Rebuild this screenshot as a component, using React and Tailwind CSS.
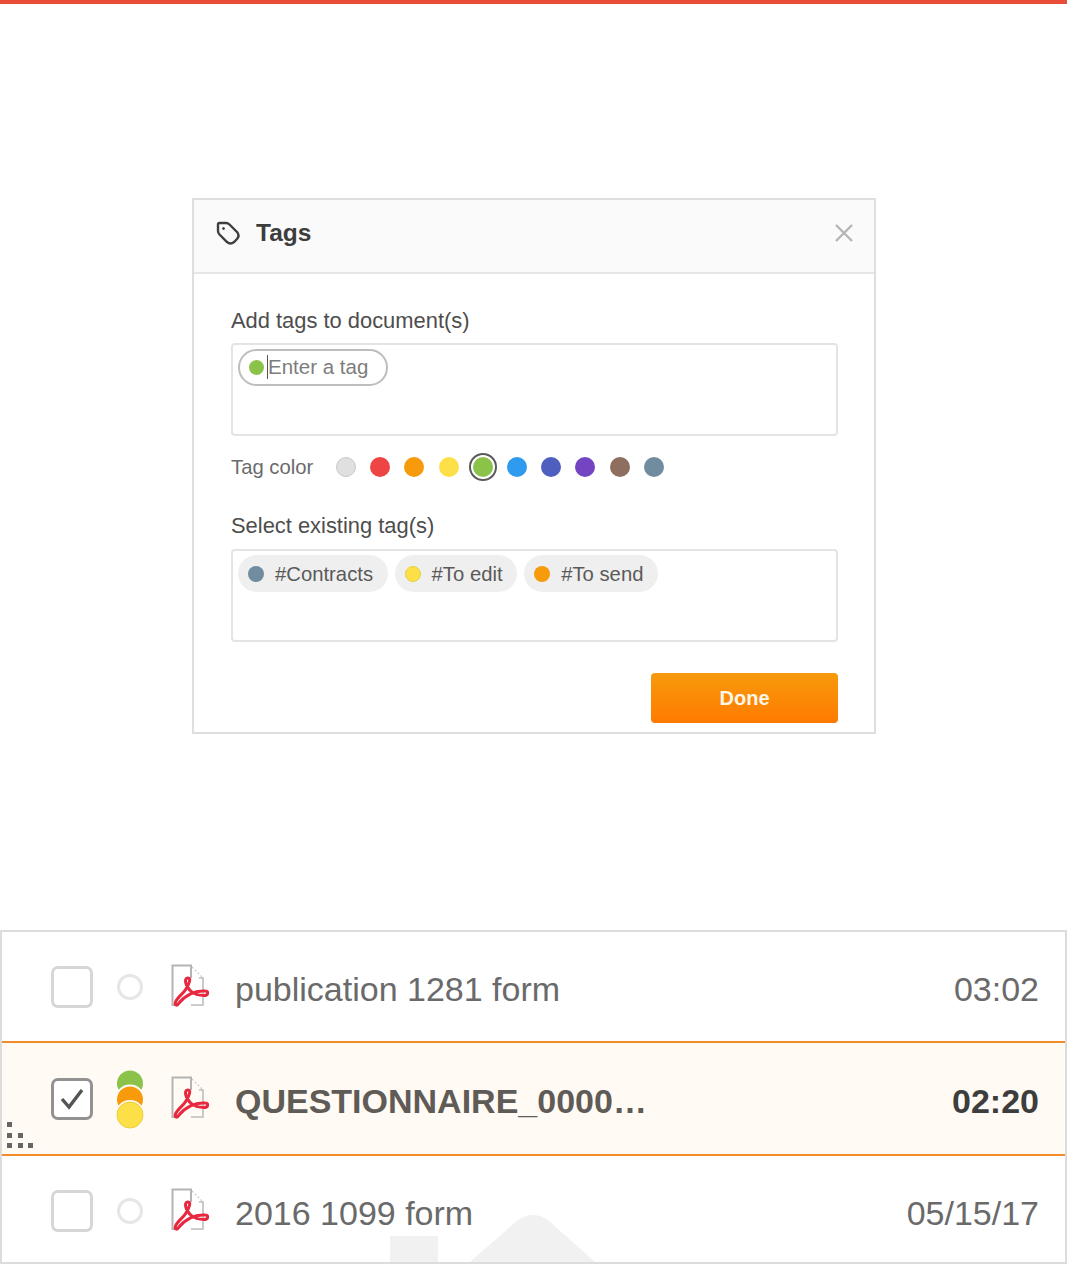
const tagColors = [
  "#e0e0e0",
  "#ef4444",
  "#f79a0c",
  "#fde047",
  "#8bc34a",
  "#2f9bef",
  "#4f5fc0",
  "#7445c2",
  "#8d6e5f",
  "#708c9e",
];

const existingTags = [
  { label: "#Contracts", color: "#708c9e" },
  { label: "#To edit", color: "#fde047", ring: true },
  { label: "#To send", color: "#f79a0c" },
];

const rows = [
  { name: "publication 1281 form", time: "03:02", h: "h-[109px]" },
  { name: "QUESTIONNAIRE_0000…", time: "02:20", h: "h-[115px]", selected: true },
  { name: "2016 1099 form", time: "05/15/17", h: "h-[106px] pt-[4px]", last: true },
];

const TagIcon = () => (
  <svg width="28" height="28" viewBox="0 0 28 28" fill="none" stroke="#3f3f3f" strokeWidth="2.4">
    <path d="M4 5.5 Q4 4 5.5 4 L12 4 Q14 4 15.5 5.5 L23 13 Q26 16.5 23 20 L20 23 Q16.5 26 13 23 L5.5 15.5 Q4 14 4 12 Z" />
    <circle cx="9.5" cy="9.5" r="1" fill="#3f3f3f" strokeWidth="1" />
  </svg>
);

const CloseIcon = () => (
  <svg width="20" height="20" viewBox="0 0 20 20" stroke="#b5b5b5" strokeWidth="2.4">
    <path d="M2 2 L18 18 M18 2 L2 18" />
  </svg>
);

const PdfIcon = () => (
  <svg width="38" height="46" viewBox="0 0 38 46" fill="none">
    <path d="M8 41 H1.5 V1.5 H20 V14" stroke="#b4b4b4" strokeWidth="2" />
    <path d="M20 41 H32 V14 H28" stroke="#bdbdbd" strokeWidth="1.6" />
    <path d="M21 3 L31 13" stroke="#c8c8c8" strokeWidth="1.2" strokeDasharray="2 2" />
    <path
      d="M17 14 C14 14 14 18 15.5 21 C19 28.5 24 31.5 33 31.5 C37.5 31.5 38 27 34 27 C24 26 14 31.5 8 39 C6 42.5 3.5 41.5 4.5 38 C6.5 33 12 30 15 25 C18 20 20.5 14 17 14 Z"
      stroke="#e8283f"
      strokeWidth="3"
    />
  </svg>
);

const CheckBox = ({ checked }) => (
  <div
    className={`flex h-[42px] w-[42px] items-center justify-center rounded-[7px] border-[3px] bg-white ${
      checked ? "border-[#929292]" : "border-[#d6d6d6]"
    }`}
  >
    {checked && (
      <svg width="28" height="24" viewBox="0 0 28 24" fill="none" stroke="#555" strokeWidth="3.4">
        <path d="M4 12 L11 20 L24 3" />
      </svg>
    )}
  </div>
);

const TagStack = () => (
  <svg width="30" height="60" viewBox="0 0 30 60">
    <circle cx="15" cy="14.5" r="13" fill="#8bc34a" />
    <circle cx="15" cy="30.5" r="15" fill="#fffaf3" />
    <circle cx="15" cy="30.5" r="13" fill="#f79a0c" />
    <circle cx="15" cy="46" r="15" fill="#fffaf3" />
    <circle cx="15" cy="46" r="13" fill="#fde047" stroke="#e8cf3a" strokeWidth="1" />
  </svg>
);

const DragDots = () => (
  <div className="absolute bottom-[6px] left-[5px] flex flex-col gap-[5.5px]">
    {[1, 2, 3].map((n) => (
      <div key={n} className="flex gap-[5.5px]">
        {Array.from({ length: n }).map((_, i) => (
          <span key={i} className="h-[5px] w-[5px] bg-[#666]" />
        ))}
      </div>
    ))}
  </div>
);

const TagsDialog = () => (
  <div className="ml-[192px] mt-[194px] w-[684px] border-2 border-[#dedede] bg-white">
    <div className="flex h-[74px] items-center justify-between border-b-2 border-[#e6e6e6] bg-[#fafafa] pb-[6px] pl-[20px] pr-[20px]">
      <div className="flex items-center gap-[14px]">
        <TagIcon />
        <span className="text-[24.5px] font-bold text-[#3d3d3d]">Tags</span>
      </div>
      <CloseIcon />
    </div>

    <div className="pl-[37px] pr-[36px] pt-[33px] pb-[9px]">
      <p className="text-[21.9px] leading-[28px] text-[#4d4d4d]">Add tags to document(s)</p>
      <div className="mt-[8px] h-[93px] rounded border-2 border-[#e4e4e4] pl-[5px] pt-[4px]">
        <div className="flex h-[37px] w-[150px] items-center rounded-full border-2 border-[#bdbdbd] pl-[9px]">
          <span className="h-[15px] w-[15px] rounded-full bg-[#8bc34a]" />
          <span className="ml-[3px] mb-[2px] border-l border-[#555] text-[20.5px] leading-[24px] text-[#7d7d7d]">
            Enter a tag
          </span>
        </div>
      </div>

      <div className="mt-[14px] flex h-[34px] items-center">
        <span className="w-[105px] text-[20.3px] text-[#6b6b6b]">Tag color</span>
        <div className="flex items-center gap-[14.2px]">
          {tagColors.map((color, i) =>
            i === 4 ? (
              <span
                key={color}
                className="-mx-[4px] flex h-[28px] w-[28px] items-center justify-center rounded-full border-2 border-[#5a5a5a] bg-white"
              >
                <span className="h-[20px] w-[20px] rounded-full" style={{ background: color }} />
              </span>
            ) : (
              <span
                key={color}
                className={`h-[20px] w-[20px] rounded-full ${i === 0 ? "border border-[#c9c9c9]" : ""}`}
                style={{ background: color }}
              />
            )
          )}
        </div>
      </div>

      <p className="mt-[28px] text-[21.9px] leading-[28px] text-[#4d4d4d]">Select existing tag(s)</p>
      <div className="mt-[9px] flex h-[93px] items-start gap-[7px] rounded border-2 border-[#e4e4e4] pl-[5px] pt-[4px]">
        {existingTags.map((tag) => (
          <div key={tag.label} className="flex h-[37px] items-center rounded-full bg-[#efefef] pl-[10px] pr-[14.5px]">
            <span
              className={`h-[16px] w-[16px] rounded-full ${tag.ring ? "border border-[#e8cf3a]" : ""}`}
              style={{ background: tag.color }}
            />
            <span className="ml-[11px] pt-[1px] text-[20.3px] text-[#5a5a5a]">{tag.label}</span>
          </div>
        ))}
      </div>

      <div className="mt-[31px] flex justify-end">
        <button className="h-[50px] w-[187px] rounded-[4px] bg-gradient-to-b from-[#f79a0c] to-[#ff7a00] text-[20px] font-bold text-[#fff6e6]">
          Done
        </button>
      </div>
    </div>
  </div>
);

const Row = ({ row }) => (
  <div
    className={`relative flex items-center pl-[49px] pr-[26px] ${row.h} ${
      row.selected ? "border-y-2 border-[#f28c28] bg-[#fffaf3]" : ""
    }`}
  >
    <CheckBox checked={row.selected} />
    <div className="flex w-[74px] justify-center">
      {row.selected ? (
        <TagStack />
      ) : (
        <span className="h-[26px] w-[26px] rounded-full border-[3px] border-[#e6e6e6]" />
      )}
    </div>
    <div className="ml-[4px]">
      <PdfIcon />
    </div>
    <span
      className={`ml-[26px] flex-1 pt-[5px] text-[34px] ${row.selected ? "font-bold text-[#5f5b57]" : "text-[#6a6a6a]"}`}
    >
      {row.name}
    </span>
    <span className={`pt-[5px] text-[34px] ${row.selected ? "font-bold text-[#3d3d3d]" : "text-[#6a6a6a]"}`}>
      {row.time}
    </span>
    {row.selected && <DragDots />}
    {row.last && (
      <svg className="absolute bottom-0 left-[388px]" width="210" height="48" viewBox="0 0 210 48" fill="#f1f1f1">
        <rect x="0" y="22" width="48" height="26" />
        <path d="M80 48 L128 6 Q143 -4 158 6 L205 48 Z" />
      </svg>
    )}
  </div>
);

export default function App() {
  return (
    <div className="h-[1264px] w-[1068px] overflow-hidden bg-white font-['Liberation_Sans',Arial,sans-serif]">
      <div className="h-1 w-[1067px] bg-[#ea4c3a]" />
      <TagsDialog />
      <div className="mt-[196px] w-[1067px] border-2 border-[#dcdcdc]">
        {rows.map((row) => (
          <Row key={row.name} row={row} />
        ))}
      </div>
    </div>
  );
}
